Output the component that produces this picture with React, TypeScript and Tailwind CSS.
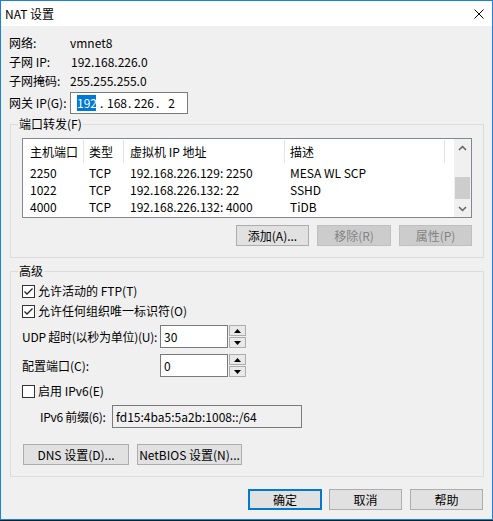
import React from 'react';

const Check = () => (
  <svg width="11" height="11" viewBox="0 0 11 11">
    <path d="M1.5 5.5 L4 8 L9.5 2.5" fill="none" stroke="#222" strokeWidth="1.3" />
  </svg>
);

function Checkbox({ checked, label }: { checked?: boolean; label: string }) {
  return (
    <div className="flex items-center h-[20px] ml-[11px]">
      <div className="w-[13px] h-[13px] shrink-0 border border-[#333333] bg-white flex items-center justify-center">
        {checked && <Check />}
      </div>
      <span className="ml-[3px] whitespace-nowrap">{label}</span>
    </div>
  );
}

function Btn({ w, label, disabled, primary }: { w: string; label: string; disabled?: boolean; primary?: boolean }) {
  const base = 'h-[21px] shrink-0 flex items-center justify-center leading-[16px] whitespace-nowrap ';
  if (disabled) return <div className={base + w + ' bg-[#cccccc] border border-[#bfbfbf] text-[#838383]'}>{label}</div>;
  if (primary) return <div className={base + w + ' bg-[#e1e1e1] border-2 border-[#0078d7]'}>{label}</div>;
  return <div className={base + w + ' bg-[#e1e1e1] border border-[#adadad]'}>{label}</div>;
}

function Group({ label, h, children }: { label: string; h: string; children: React.ReactNode }) {
  return (
    <div className={'relative ml-[9px] w-[474px] border border-[#dcdcdc] ' + h}>
      <span className="absolute -top-[9px] left-[7px] px-[1px] bg-[#f0f0f0] leading-[16px]">{label}</span>
      {children}
    </div>
  );
}

const Chevron = ({ down }: { down?: boolean }) => (
  <svg width="9" height="6" viewBox="0 0 9 6">
    <path d={down ? 'M1 1 L4.5 4.5 L8 1' : 'M1 5 L4.5 1.5 L8 5'} fill="none" stroke="#606060" strokeWidth="1.5" />
  </svg>
);

function Spinner() {
  return (
    <div className="flex flex-col w-[18px] h-[23px] pl-[1px] gap-[1px] shrink-0">
      <div className="h-[11px] border border-[#adadad] bg-[#e9e9e9] flex items-center justify-center">
        <svg width="7" height="4" viewBox="0 0 7 4"><path d="M0 4 L3.5 0 L7 4 Z" fill="#000" /></svg>
      </div>
      <div className="h-[11px] border border-[#adadad] bg-[#e9e9e9] flex items-center justify-center">
        <svg width="7" height="4" viewBox="0 0 7 4"><path d="M0 0 L3.5 4 L7 0 Z" fill="#000" /></svg>
      </div>
    </div>
  );
}

const ROWS = [
  ['2250', 'TCP', '192.168.226.129: 2250', 'MESA WL SCP'],
  ['1022', 'TCP', '192.168.226.132: 22', 'SSHD'],
  ['4000', 'TCP', '192.168.226.132: 4000', 'TiDB'],
];

const COLS = ['w-[61px] pl-[7px]', 'w-[40px] pl-[5px]', 'w-[161px] pl-[6px]', 'w-[160px] pl-[5px]'];

export default function App() {
  return (
    <div className="w-[493px] h-[521px] bg-[#0c2238] overflow-hidden text-[12px] text-black font-['Noto_Sans_CJK_SC',sans-serif]">
      <div className="w-[493px] h-[520px] border border-[#1883d7] bg-[#f0f0f0] flex flex-col">
        <div className="h-[25px] bg-white flex items-center justify-between pl-[4px] pr-[8px]">
          <span className="leading-[16px]">NAT 设置</span>
          <svg width="10" height="10" viewBox="0 0 10 10">
            <path d="M0.5 0.5 L9.5 9.5 M9.5 0.5 L0.5 9.5" stroke="#000" strokeWidth="1" />
          </svg>
        </div>

        <div className="pl-[8px] pt-[7px] leading-[16px]">
          <div className="flex items-center h-[19px]"><span className="w-[61px]">网络:</span><span>vmnet8</span></div>
          <div className="flex items-center h-[19px]"><span className="w-[62px]">子网 IP:</span><span>192.168.226.0</span></div>
          <div className="flex items-center h-[19px]"><span className="w-[61px]">子网掩码:</span><span>255.255.255.0</span></div>
          <div className="flex items-center h-[22px] mt-[2px]">
            <span className="w-[61px] shrink-0 whitespace-nowrap">网关 IP(G):</span>
            <div className="w-[118px] h-[22px] border border-[#7a7a7a] bg-white flex items-center pl-[6px]">
              <span className="w-[19px] shrink-0 text-center bg-[#0078d7] text-white">192</span>
              <span className="w-[11px] shrink-0 pl-[4px]">.</span>
              <span className="w-[18px] shrink-0 text-center">168</span>
              <span className="w-[9px] shrink-0 pl-[3px]">.</span>
              <span className="w-[18px] shrink-0 text-center">226</span>
              <span className="w-[10px] shrink-0 pl-[4px]">.</span>
              <span className="w-[19px] shrink-0 text-center">2</span>
            </div>
          </div>
        </div>

        <div className="mt-[10px] leading-[16px]">
          <Group label="端口转发(F)" h="h-[134px]">
            <div className="ml-[11px] mt-[13px] w-[450px] h-[80px] border border-[#828790] bg-white flex">
              <div className="w-[431px]">
                <div className="flex h-[25px] pt-[1px]">
                  {['主机端口', '类型', '虚拟机 IP 地址', '描述'].map((t, i) => (
                    <div key={t} className={COLS[i] + ' shrink-0 flex items-center border-r border-[#e5e5e5] h-[23px]'}>{t}</div>
                  ))}
                </div>
                {ROWS.map((r) => (
                  <div key={r[0]} className="flex h-[17px] items-center">
                    {r.map((c, i) => (
                      <div key={i} className={COLS[i] + ' shrink-0 whitespace-nowrap' + (i < 3 ? ' pr-[1px]' : '')}>{c}</div>
                    ))}
                  </div>
                ))}
              </div>
              <div className="w-[17px] bg-[#f0f0f0] flex flex-col">
                <div className="h-[17px] flex items-center justify-center"><Chevron /></div>
                <div className="h-[44px]">
                  <div className="mt-[21px] h-[22px] mx-[1px] bg-[#cdcdcd]" />
                </div>
                <div className="h-[17px] flex items-center justify-center"><Chevron down /></div>
              </div>
            </div>
            <div className="flex ml-[225px] mt-[7px] gap-[8px]">
              <Btn w="w-[73px]" label="添加(A)..." />
              <Btn w="w-[74px]" label="移除(R)" disabled />
              <Btn w="w-[73px]" label="属性(P)" disabled />
            </div>
          </Group>
        </div>

        <div className="mt-[13px] leading-[16px]">
          <Group label="高级" h="h-[206px]">
            <div className="mt-[9px]">
              <Checkbox checked label="允许活动的 FTP(T)" />
              <Checkbox checked label="允许任何组织唯一标识符(O)" />
            </div>
            <div className="flex items-center h-[23px] mt-[4px] ml-[11px]">
              <span className="w-[138px] shrink-0 whitespace-nowrap tracking-[-0.25px]">UDP 超时(以秒为单位)(U):</span>
              <div className="w-[68px] shrink-0 h-[23px] border border-[#7a7a7a] bg-white flex items-center pl-[3px]">30</div>
              <Spinner />
            </div>
            <div className="flex items-center h-[23px] mt-[6px] ml-[11px]">
              <span className="w-[138px] shrink-0 whitespace-nowrap">配置端口(C):</span>
              <div className="w-[68px] shrink-0 h-[23px] border border-[#7a7a7a] bg-white flex items-center pl-[3px]">0</div>
              <Spinner />
            </div>
            <div className="mt-[4px]">
              <Checkbox label="启用 IPv6(E)" />
            </div>
            <div className="flex items-center h-[23px] mt-[4px] ml-[29px]">
              <span className="w-[72px] shrink-0 whitespace-nowrap tracking-[-0.3px]">IPv6 前缀(6):</span>
              <div className="w-[190px] shrink-0 h-[23px] border border-[#7a7a7a] bg-[#f0f0f0] flex items-center pl-[3px] whitespace-nowrap">fd15:4ba5:5a2b:1008::/64</div>
            </div>
            <div className="flex ml-[12px] mt-[16px] gap-[8px]">
              <Btn w="w-[106px]" label="DNS 设置(D)..." />
              <Btn w="w-[105px]" label="NetBIOS 设置(N)..." />
            </div>
          </Group>
        </div>

        <div className="flex ml-[247px] mt-[12px] leading-[16px]">
          <Btn w="w-[74px]" label="确定" primary />
          <div className="w-[7px]" />
          <Btn w="w-[73px]" label="取消" />
          <div className="w-[8px]" />
          <Btn w="w-[73px]" label="帮助" />
        </div>
      </div>
    </div>
  );
}
